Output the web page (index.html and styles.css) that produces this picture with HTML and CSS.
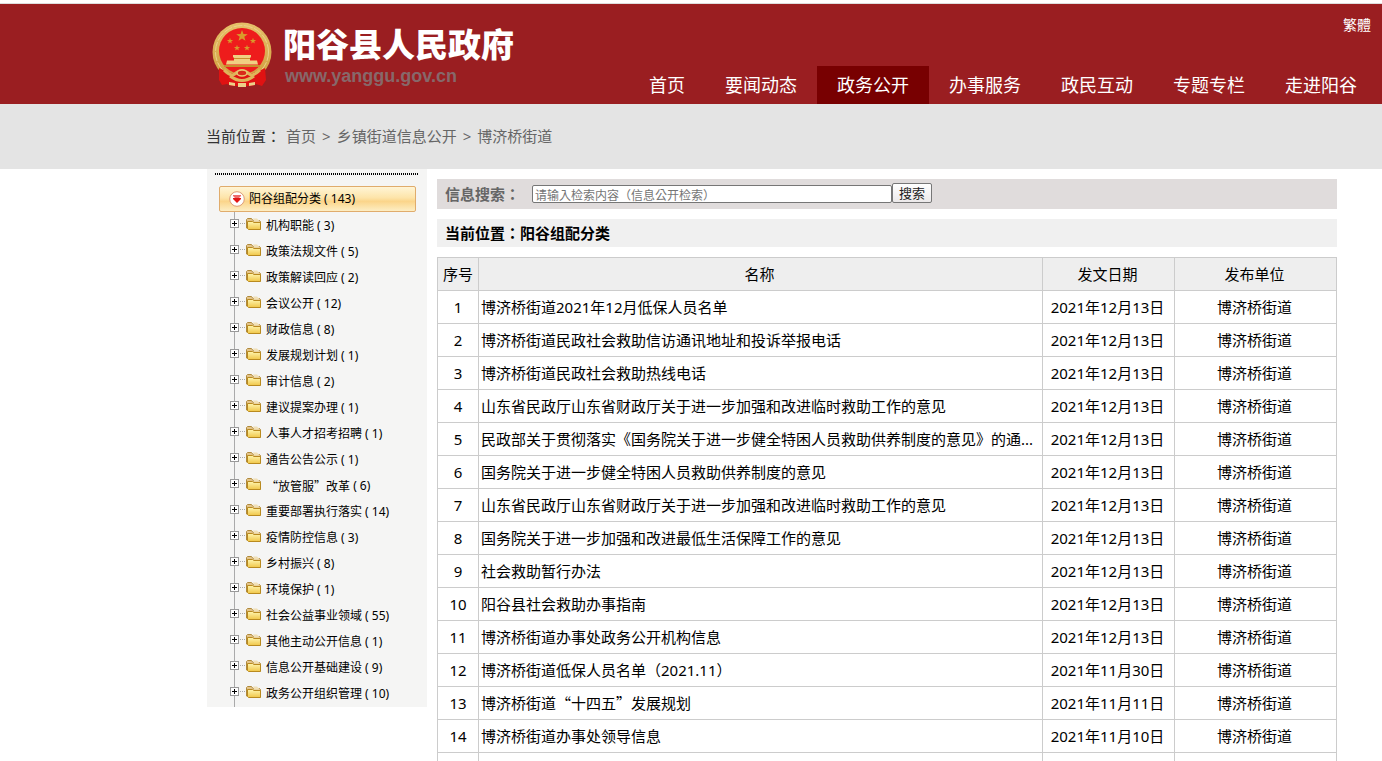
FILE: index.html
```html
<!DOCTYPE html>
<html lang="zh-CN">
<head>
<meta charset="utf-8">
<title>阳谷县人民政府</title>
<link rel="stylesheet" href="styles.css">
</head>
<body>
<header class="header">
  <a class="brand" href="#">
    <svg class="emblem" viewBox="0 0 60 66" aria-hidden="true">
      <defs>
        <linearGradient id="gold" x1="0" y1="0" x2="0" y2="1"><stop offset="0" stop-color="#e6c069"/><stop offset="1" stop-color="#cf9c3c"/></linearGradient>
        <path id="star" d="M0-5 1.2-1.6 4.8-1.5 1.9.6 2.9 4 0 2-2.9 4-1.9.6-4.8-1.5-1.2-1.6Z"/>
      </defs>
      <circle cx="30" cy="30" r="29.5" fill="url(#gold)"/>
      <circle cx="30" cy="30" r="26.500" fill="none" stroke="#ecd08a" stroke-width="1" stroke-dasharray="9 1.500"/>
      <circle cx="30" cy="29" r="23" fill="#ee1c1c"/>
      <g fill="#d99a2b">
        <use href="#star" transform="translate(30 14) scale(1.2)"/>
        <use href="#star" transform="translate(18 19) scale(.65)"/>
        <use href="#star" transform="translate(41 19) scale(.65)"/>
        <use href="#star" transform="translate(25 26) scale(.65)"/>
        <use href="#star" transform="translate(35 26) scale(.65)"/>
      </g>
      <path fill="#f0cf82" d="M21 33h18v2.500h-1v3h7l1 4H14l1-4h7v-3h-1z"/>
      <path fill="#c98d2e" d="M22 36h16v1H22zM12 43h36v2H12z"/>
      <path fill="#e01212" d="M7 46l8 4 15 4 15-4 8-4 1 12-4 6-6-2-4 2H20l-5-2-5 1-3-5z"/>
      <path fill="none" stroke="#dfb45a" stroke-width="3" d="M12 48q8 8 12 3 6-5 12 0 4 5 12-3M18 54q12 9 24 0"/>
      <ellipse cx="30" cy="51" rx="5" ry="3" fill="#d92a1a" stroke="#e8c56f" stroke-width="1.500"/>
      <path fill="#ecd089" d="M17 60l6 1v3l-6-1zm20 1l6-1v3l-6 1zM26 61h8v4h-8z"/>
    </svg>
    <span class="brand-text"><span class="brand-name">阳谷县人民政府</span><span class="brand-url">www.yanggu.gov.cn</span></span>
  </a>
  <div class="header-right">
    <a class="lang" href="#" lang="zh-TW">繁體</a>
    <nav class="nav">
      <a href="#">首页</a><a href="#">要闻动态</a><a class="active" href="#">政务公开</a><a href="#">办事服务</a><a href="#">政民互动</a><a href="#">专题专栏</a><a href="#">走进阳谷</a>
    </nav>
  </div>
</header>
<div class="crumbs">当前位置<span class="wide" lang="zh-TW">：</span><a href="#">首页</a><span class="sep">&gt;</span><a href="#">乡镇街道信息公开</a><span class="sep">&gt;</span><a href="#">博济桥街道</a></div>

<svg class="defs" aria-hidden="true">
  <defs>
    <linearGradient id="fold" x1="0" y1="0" x2="0" y2="1"><stop offset="0" stop-color="#fff6b0"/><stop offset="1" stop-color="#f0c648"/></linearGradient>
    <symbol id="node" viewBox="0 0 32 16">
      <path fill="none" stroke="#aaa" d="M10 7.500h6" stroke-dasharray="1 1"/>
      <rect x=".5" y="3.500" width="8" height="8" fill="#fff" stroke="#999"/>
      <path stroke="#000" d="M2 7.500h5M4.500 5v5"/>
      <path fill="#e3c48a" stroke="#b08a3c" d="M16.500 12V3.500l1-1h4l1.500 2h6.500l1 1V13z"/>
      <path fill="#f0e0b8" d="M23 2.500h4l2 2v1h-5z"/>
      <path fill="url(#fold)" stroke="#b98a1f" d="M17.500 5.500h5l1.500 1h6.500v7h-12l-1-1z"/>
    </symbol>
  </defs>
</svg>

<div class="content">
  <aside class="sidebar">
    <div class="dots"></div>
    <a class="root" href="#">
      <svg class="root-icon" viewBox="0 0 16 16" aria-hidden="true"><circle cx="8" cy="8" r="7.300" fill="#fff" stroke="#dd9b76"/><path fill="#ee6b6b" d="M4 4h8v1l-2 2H6L4 5z"/><path fill="#e31515" d="M4 7h8v1l-4 4-4-4z"/></svg>
      阳谷组配分类 ( 143)
    </a>
    <ul class="tree">
      <li><a href="#"><svg><use href="#node"/></svg>机构职能 ( 3)</a></li>
      <li><a href="#"><svg><use href="#node"/></svg>政策法规文件 ( 5)</a></li>
      <li><a href="#"><svg><use href="#node"/></svg>政策解读回应 ( 2)</a></li>
      <li><a href="#"><svg><use href="#node"/></svg>会议公开 ( 12)</a></li>
      <li><a href="#"><svg><use href="#node"/></svg>财政信息 ( 8)</a></li>
      <li><a href="#"><svg><use href="#node"/></svg>发展规划计划 ( 1)</a></li>
      <li><a href="#"><svg><use href="#node"/></svg>审计信息 ( 2)</a></li>
      <li><a href="#"><svg><use href="#node"/></svg>建议提案办理 ( 1)</a></li>
      <li><a href="#"><svg><use href="#node"/></svg>人事人才招考招聘 ( 1)</a></li>
      <li><a href="#"><svg><use href="#node"/></svg>通告公告公示 ( 1)</a></li>
      <li><a href="#"><svg><use href="#node"/></svg><span class="cjk">“放管服”改革</span> ( 6)</a></li>
      <li><a href="#"><svg><use href="#node"/></svg>重要部署执行落实 ( 14)</a></li>
      <li><a href="#"><svg><use href="#node"/></svg>疫情防控信息 ( 3)</a></li>
      <li><a href="#"><svg><use href="#node"/></svg>乡村振兴 ( 8)</a></li>
      <li><a href="#"><svg><use href="#node"/></svg>环境保护 ( 1)</a></li>
      <li><a href="#"><svg><use href="#node"/></svg>社会公益事业领域 ( 55)</a></li>
      <li><a href="#"><svg><use href="#node"/></svg>其他主动公开信息 ( 1)</a></li>
      <li><a href="#"><svg><use href="#node"/></svg>信息公开基础建设 ( 9)</a></li>
      <li><a href="#"><svg><use href="#node"/></svg>政务公开组织管理 ( 10)</a></li>
    </ul>
  </aside>
  <main class="main">
    <form class="search">
      <label for="q">信息搜索<span class="wide" lang="zh-TW">：</span></label>
      <input id="q" type="text" lang="zh-TW" placeholder="请输入检索内容（信息公开检索）">
      <button type="button">搜索</button>
    </form>
    <h1 class="title">当前位置<span class="wide" lang="zh-TW">：</span>阳谷组配分类</h1>
    <table class="list">
      <colgroup><col class="c-no"><col><col class="c-date"><col class="c-unit"></colgroup>
      <thead><tr><th>序号</th><th>名称</th><th>发文日期</th><th>发布单位</th></tr></thead>
      <tbody>
        <tr><td>1</td><td><a href="#">博济桥街道2021年12月低保人员名单</a></td><td>2021年12月13日</td><td>博济桥街道</td></tr>
        <tr><td>2</td><td><a href="#">博济桥街道民政社会救助信访通讯地址和投诉举报电话</a></td><td>2021年12月13日</td><td>博济桥街道</td></tr>
        <tr><td>3</td><td><a href="#">博济桥街道民政社会救助热线电话</a></td><td>2021年12月13日</td><td>博济桥街道</td></tr>
        <tr><td>4</td><td><a href="#">山东省民政厅山东省财政厅关于进一步加强和改进临时救助工作的意见</a></td><td>2021年12月13日</td><td>博济桥街道</td></tr>
        <tr><td>5</td><td><a href="#">民政部关于贯彻落实《国务院关于进一步健全特困人员救助供养制度的意见》的通...</a></td><td>2021年12月13日</td><td>博济桥街道</td></tr>
        <tr><td>6</td><td><a href="#">国务院关于进一步健全特困人员救助供养制度的意见</a></td><td>2021年12月13日</td><td>博济桥街道</td></tr>
        <tr><td>7</td><td><a href="#">山东省民政厅山东省财政厅关于进一步加强和改进临时救助工作的意见</a></td><td>2021年12月13日</td><td>博济桥街道</td></tr>
        <tr><td>8</td><td><a href="#">国务院关于进一步加强和改进最低生活保障工作的意见</a></td><td>2021年12月13日</td><td>博济桥街道</td></tr>
        <tr><td>9</td><td><a href="#">社会救助暂行办法</a></td><td>2021年12月13日</td><td>博济桥街道</td></tr>
        <tr><td>10</td><td><a href="#">阳谷县社会救助办事指南</a></td><td>2021年12月13日</td><td>博济桥街道</td></tr>
        <tr><td>11</td><td><a href="#">博济桥街道办事处政务公开机构信息</a></td><td>2021年12月13日</td><td>博济桥街道</td></tr>
        <tr><td>12</td><td><a href="#">博济桥街道低保人员名单<span class="wide" lang="zh-TW">（</span>2021.11<span class="wide" lang="zh-TW">）</span></a></td><td>2021年11月30日</td><td>博济桥街道</td></tr>
        <tr><td>13</td><td><a href="#">博济桥街道<span class="cjk">“十四五”</span>发展规划</a></td><td>2021年11月11日</td><td>博济桥街道</td></tr>
        <tr><td>14</td><td><a href="#">博济桥街道办事处领导信息</a></td><td>2021年11月10日</td><td>博济桥街道</td></tr>
        <tr><td></td><td></td><td></td><td></td></tr>
      </tbody>
    </table>
  </main>
</div>
</body>
</html>
```
FILE: styles.css
```css
* { box-sizing: border-box; }
body {
  margin: 0;
  font: 15px/24px "Noto Sans", "Noto Sans CJK SC", sans-serif;
  color: #000;
  background: #fff;
}
a { color: inherit; text-decoration: none; }
.defs { position: absolute; width: 0; height: 0; }
.cjk { font-family: "Noto Sans CJK SC", sans-serif; }
.wide { font-family: "Noto Sans CJK TC", sans-serif; }

.header {
  display: flex;
  justify-content: space-between;
  height: 101px;
  margin-top: 3px;
  padding: 0 5px 0 212px;
  border-top: 1px solid #ddd;
  background: #9a1e21;
  color: #fff;
}
.brand { display: flex; gap: 11px; padding-top: 18px; }
.emblem { width: 60px; height: 66px; }
.brand-text { display: flex; flex-direction: column; gap: 6px; padding-top: 5px; }
.brand-name { font: 900 33px/33px "Noto Sans CJK SC", sans-serif; }
.brand-url { font: bold 18px/20px "Liberation Sans", sans-serif; color: #87686a; padding-left: 2px; }
.header-right { display: flex; flex-direction: column; justify-content: space-between; align-items: flex-end; }
.lang { font-size: 14px; padding: 8px 6px 0 0; font-family: "Noto Sans CJK TC", sans-serif; }
.nav { display: flex; }
.nav a { padding: 0 20px; font-size: 18px; line-height: 38px; }
.nav .active { background: #780001; }

.crumbs {
  height: 65px;
  padding-left: 206px;
  line-height: 64px;
  background: #e4e4e4;
  color: #333;
}
.crumbs a, .crumbs .sep { color: #666; }
.crumbs .wide { margin-right: 5px; }
.crumbs .sep { margin: 0 6px; }

.content {
  display: flex;
  align-items: flex-start;
  gap: 10px;
  padding: 0 45px 0 207px;
}
.sidebar {
  flex: 0 0 220px;
  padding: 4px 8px 0;
  background: #f5f5f4;
  font-size: 12px;
}
.dots {
  height: 2px;
  margin-bottom: 11px;
  background: repeating-linear-gradient(90deg, #000 0 1px, transparent 1px 2px);
}
.root {
  display: flex;
  align-items: center;
  gap: 4px;
  height: 26px;
  margin: 0 3px 0 4px;
  padding-left: 9px;
  border: 1px solid #e0ac6c;
  border-radius: 2px;
  background: linear-gradient(#fff5d6, #fde4a9 45%, #fbd58a 60%, #fdeec4);
}
.root-icon { width: 16px; height: 16px; }
.tree {
  margin: 0 0 0 19px;
  padding: 1px 0 0;
  border-left: 1px solid #aaa;
  list-style: none;
}
.tree li { height: 26px; }
.tree a { display: flex; align-items: center; height: 26px; margin-left: -5px; white-space: pre; }
.tree svg { width: 32px; height: 16px; margin-right: 4px; margin-bottom: 4px; }

.main { flex: 1; min-width: 0; padding-top: 10px; }
.search {
  display: flex;
  align-items: center;
  height: 30px;
  padding-left: 8px;
  background: #e0dcdc;
}
.search label { width: 87px; font-weight: bold; color: #666; }
.search input {
  width: 360px;
  height: 18px;
  padding: 0 2px;
  border: 1px solid #767676;
  border-radius: 2px;
  background: #fff;
  font: 12px/16px "Noto Sans CJK TC", sans-serif;
}
.search input::placeholder { color: #757575; }
.search button {
  width: 40px;
  height: 20px;
  padding: 0;
  margin-bottom: 2px;
  border: 1px solid #777;
  border-radius: 2px;
  background: linear-gradient(#fff, #ece9ea);
  font: 13px/16px "Noto Sans CJK SC", sans-serif;
  color: #222;
}
.title {
  height: 28px;
  margin: 10px 0;
  padding-left: 8px;
  background: #f0f0f0;
  font-size: 15px;
  line-height: 28px;
}
.list { width: 100%; table-layout: fixed; border-collapse: collapse; }
.c-no { width: 41px; }
.c-date { width: 132px; }
.c-unit { width: 162px; }
.list th, .list td {
  height: 33px;
  padding: 0 4px 0 2px;
  border: 1px solid #ccc;
  line-height: 32px;
  text-align: center;
  white-space: nowrap;
}
.list th:first-child, .list td:first-child { padding: 0 2px; }
.list th { background: #eee; font-weight: normal; }
.list td:nth-child(2) { text-align: left; overflow: hidden; text-overflow: ellipsis; }
```
